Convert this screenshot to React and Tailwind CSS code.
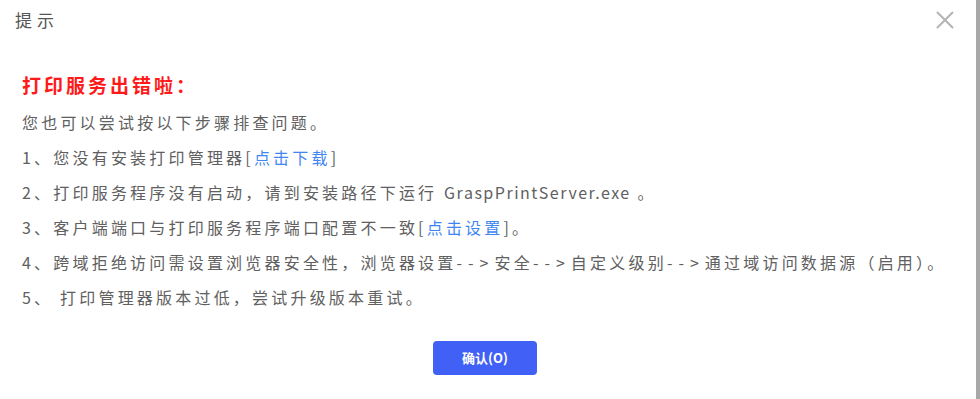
const font = { fontFamily: '"Microsoft YaHei", "Noto Sans CJK SC", "Noto Sans", sans-serif' };

function Link({ children }) {
  return <span className="text-[#3f86f2]">{children}</span>;
}

function Arrow() {
  return <span className="tracking-[6px]">--&gt;</span>;
}

function CloseIcon() {
  return (
    <svg width="18" height="18" viewBox="0 0 18 18" className="text-[#b4b4b4]">
      <path d="M1.5 1.5 L16.5 16.5 M16.5 1.5 L1.5 16.5" stroke="currentColor" strokeWidth="2" strokeLinecap="round" />
    </svg>
  );
}

export default function App() {
  return (
    <div className="w-[980px] h-[399px] flex bg-white" style={font}>
      <div className="flex-1 flex flex-col">
        <div className="h-[40px] flex items-center justify-between pl-[15px] pr-[22px]">
          <span className="text-[17px] tracking-[5px] text-[#555]">提示</span>
          <CloseIcon />
        </div>
        <div className="pl-[22px] pt-[27px] text-[16px] tracking-[3.2px] text-[#606060]">
          <div className="text-[19px] leading-[35px] font-bold tracking-[3px] text-[#ff1a1a]">打印服务出错啦：</div>
          <div className="mt-[3px] leading-[35px]">
            <div>您也可以尝试按以下步骤排查问题。</div>
            <div>1、您没有安装打印管理器[<Link>点击下载</Link>]</div>
            <div>
              2、打印服务程序没有启动，请到安装路径下运行 <span className="tracking-[1.5px]">GraspPrintServer.exe</span> 。
            </div>
            <div>3、客户端端口与打印服务程序端口配置不一致[<Link>点击设置</Link>]。</div>
            <div>
              4、跨域拒绝访问需设置浏览器安全性，浏览器设置<Arrow />安全<Arrow />自定义级别<Arrow />通过域访问数据源（启用）。
            </div>
            <div>5、 打印管理器版本过低，尝试升级版本重试。</div>
          </div>
        </div>
        <div className="mt-[26px] pr-[6px] flex justify-center">
          <button className="w-[104px] h-[34px] rounded-[4px] bg-[#4060f6] text-white text-[13px] font-bold">
            确认(O)
          </button>
        </div>
      </div>
      <div className="w-[4px] h-full bg-[#a8a8a8]" />
    </div>
  );
}
